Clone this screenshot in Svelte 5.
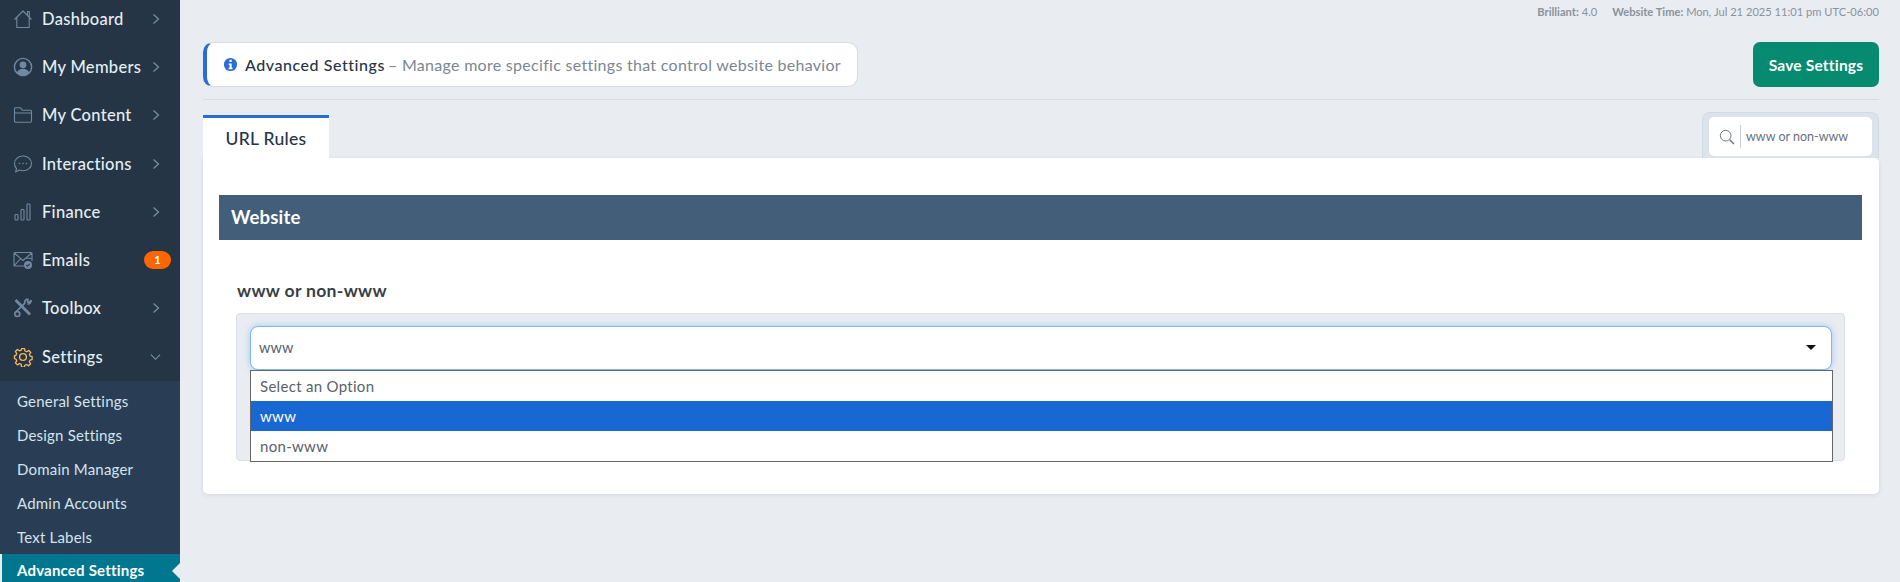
<script lang="ts">
  type Item = { label: string; icon: string; chevron?: 'right' | 'down'; badge?: string };
  const items: Item[] = [
    { label: 'Dashboard', icon: 'home', chevron: 'right' },
    { label: 'My Members', icon: 'user', chevron: 'right' },
    { label: 'My Content', icon: 'folder', chevron: 'right' },
    { label: 'Interactions', icon: 'chat', chevron: 'right' },
    { label: 'Finance', icon: 'bars', chevron: 'right' },
    { label: 'Emails', icon: 'mail', badge: '1' },
    { label: 'Toolbox', icon: 'tools', chevron: 'right' },
    { label: 'Settings', icon: 'gear', chevron: 'down' }
  ];
  const subItems = ['General Settings', 'Design Settings', 'Domain Manager', 'Admin Accounts', 'Text Labels'];
  const options = ['Select an Option', 'www', 'non-www'];
</script>

<div class="page">
  <aside class="sidebar">
    <ul class="menu">
      {#each items as item (item.label)}
        <li class="item">
          <svg class="icon" class:gold={item.icon === 'gear'} viewBox="0 0 20 20" fill="none" stroke="currentColor" stroke-width="1.100">
            {#if item.icon === 'home'}
              <path d="M1.500 10.500 10 2l8.500 8.500M3.800 8.500V18.500h12.400V8.500M14.500 6V2.500h1.800v5.500" stroke-linejoin="round" />
            {:else if item.icon === 'user'}
              <circle cx="10" cy="10" r="8.600" stroke-width="1.400" />
              <circle cx="10" cy="7.800" r="3.400" fill="currentColor" stroke="none" />
              <path d="M3.800 15.800c1.200-3 3.400-4 6.200-4s5 1 6.200 4c-1.600 1.800-3.800 2.800-6.200 2.800s-4.600-1-6.200-2.800Z" fill="currentColor" stroke="none" />
            {:else if item.icon === 'folder'}
              <path d="M1.500 16V3.800c0-.6.400-1 1-1h5l2 2.400h8c.6 0 1 .4 1 1V16c0 .7-.4 1.200-1 1.200h-15c-.6 0-1-.5-1-1.200ZM1.500 8h17" stroke-linejoin="round" />
            {:else if item.icon === 'chat'}
              <path d="M10 2c4.700 0 8.500 3.200 8.500 7.400S14.700 16.800 10 16.800c-1.300 0-2.500-.2-3.600-.7L2.600 18l.9-3.500C2.200 13.200 1.500 11.400 1.500 9.400 1.500 5.200 5.300 2 10 2Z" stroke-linejoin="round" />
              <circle cx="6.500" cy="9.500" r=".8" fill="currentColor" stroke="none" />
              <circle cx="10" cy="9.500" r=".8" fill="currentColor" stroke="none" />
              <circle cx="13.500" cy="9.500" r=".8" fill="currentColor" stroke="none" />
            {:else if item.icon === 'bars'}
              <rect x="2" y="12.500" width="3" height="5.500" rx=".8" />
              <rect x="8" y="7.500" width="3" height="10.500" rx=".8" />
              <rect x="14" y="2" width="3" height="16" rx=".8" />
            {:else if item.icon === 'mail'}
              <path d="M11.500 16H2c-.6 0-1-.4-1-1V3.500c0-.6.400-1 1-1h16c.6 0 1 .4 1 1V11M1.300 3 10 10.500 18.700 3M1.300 15.500l6-6.500M18.700 8.500l-6-.5" stroke-linejoin="round" />
              <circle cx="15" cy="15" r="4" fill="currentColor" stroke="none" />
              <path d="m13.300 15 1.300 1.300 2.100-2.400" stroke="#263545" />
            {:else if item.icon === 'tools'}
              <path d="M2.500 2 17 16.500" stroke-width="2.800" />
              <path d="M18.300 2.300 15.700 4.800l-1-.8.200-2.600c-2.300-.4-3.900 1.800-3 3.800L2.800 14" stroke-width="1.700" stroke-linejoin="round" />
              <circle cx="4.300" cy="16" r="2.500" stroke-width="1.600" />
              <path d="M14.500 5.800c1.600.8 3.600-.5 3.800-3.500" stroke-width="1.500" />
            {:else if item.icon === 'gear'}
              <circle cx="10" cy="10" r="3.400" stroke-width="1.400" />
              <path d="M8.500 1.500h3l.5 2.500 1.800.8 2.200-1.400 2.100 2.100-1.400 2.200.8 1.800 2 .5v3l-2.200.5-.8 1.800 1.400 2.200-2.100 2.100-2.200-1.400-1.800.8-.5 2h-3L8 18l-1.800-.8L4 18.600 1.900 16.500 3.300 14.300 2.500 12.500.9 12V9l1.600-.5.800-1.800L1.900 4.500 4 2.400l2.200 1.400L8 3Z" stroke-width="1.400" stroke-linejoin="round" transform="translate(.6 .2) scale(.95)" />
            {/if}
          </svg>
          <span class="label">{item.label}</span>
          {#if item.badge}
            <span class="badge">{item.badge}</span>
          {:else if item.chevron === 'right'}
            <svg class="chev" viewBox="0 0 8 12" fill="none" stroke="currentColor" stroke-width="1.200"><path d="m1.500 1.500 5 4.500-5 4.500" /></svg>
          {:else}
            <svg class="chev chev-down" viewBox="0 0 12 8" fill="none" stroke="currentColor" stroke-width="1.200"><path d="m1 1.500 5 5 5-5" /></svg>
          {/if}
        </li>
      {/each}
    </ul>
    <ul class="submenu">
      {#each subItems as sub (sub)}
        <li class="sub">{sub}</li>
      {/each}
      <li class="sub active">Advanced Settings</li>
    </ul>
  </aside>

  <main class="main">
    <div class="status">
      <span><b>Brilliant:</b> 4.0</span>
      <span><b>Website Time:</b> Mon, Jul 21 2025 11:01 pm UTC-06:00</span>
    </div>

    <header class="head">
      <div class="notice">
        <svg class="info" viewBox="0 0 16 16"><circle cx="8" cy="8" r="7" fill="#2a6dd6" /><rect x="6.900" y="3" width="2.400" height="2.300" fill="#fff" /><path d="M6 6.800h3.200v4.600h1V13H6v-1.600h1V8.400H6Z" fill="#fff" /></svg>
        <span class="notice-title">Advanced Settings</span>
        <span class="notice-text">– Manage more specific settings that control website behavior</span>
      </div>
      <button class="save" type="button">Save Settings</button>
    </header>

    <div class="tabs">
      <div class="tab">URL Rules</div>
      <div class="search-wrap">
        <div class="search">
          <svg class="search-icon" viewBox="0 0 18 18" fill="none" stroke="#6f7882" stroke-width="1.100"><circle cx="7.500" cy="7.500" r="6" /><path d="m12 12 4.800 4.800" stroke-width="1.600" /></svg>
          <span class="search-text">www or non-www</span>
        </div>
      </div>
    </div>

    <section class="card">
      <h2 class="bar">Website</h2>
      <h3 class="field-label">www or non-www</h3>
      <div class="well">
        <div class="select">
          <span>www</span>
          <i class="caret"></i>
        </div>
        <ul class="dropdown">
          {#each options as opt, i (opt)}
            <li class="opt" class:on={i === 1}>{opt}</li>
          {/each}
        </ul>
      </div>
    </section>
  </main>
</div>

<style>
  :global(body) {
    margin: 0;
    background: #e9ecf1;
  }
  .page {
    display: flex;
    height: 582px;
    overflow: hidden;
    font-family: Lato, "Noto Sans", sans-serif;
  }
  ul {
    list-style: none;
    margin: 0;
    padding: 0;
  }
  .sidebar {
    width: 180px;
    flex: none;
    background: #263545;
    color: #e4eef5;
  }
  .menu {
    margin-top: -5.500px;
  }
  .item {
    display: flex;
    align-items: center;
    height: 48.300px;
    padding: 0 13px 0 13px;
    box-sizing: border-box;
    font-size: 16.500px;
    font-weight: 500;
    letter-spacing: 0.3px;
  }
  .icon {
    width: 20px;
    height: 20px;
    flex: none;
    margin-right: 9px;
    color: #7089a3;
  }
  .icon.gold {
    color: #efb95f;
  }
  .label {
    flex: 1;
  }
  .chev {
    width: 8px;
    height: 12px;
    margin-right: 7px;
    color: #7c90a5;
  }
  .chev-down {
    width: 11px;
    height: 8px;
    margin-right: 6px;
  }
  .badge {
    width: 27px;
    height: 18px;
    border-radius: 9px;
    background: #ff6600;
    color: #fff;
    font-size: 11px;
    font-weight: 700;
    line-height: 18px;
    text-align: center;
    margin-right: -4px;
  }
  .submenu {
    background: #293e54;
    padding-top: 4.500px;
  }
  .sub {
    height: 33.800px;
    line-height: 33.800px;
    padding-left: 17px;
    font-size: 15px;
    letter-spacing: 0.2px;
    color: #d5e3ee;
  }
  .sub.active {
    position: relative;
    background: #00778f;
    border-left: 2px solid #e9ecf1;
    padding-left: 15px;
    color: #fff;
    font-weight: 700;
  }
  .sub.active::after {
    content: '';
    position: absolute;
    right: 0;
    top: 9px;
    border: 8px solid transparent;
    border-right-color: #e9ecf1;
    border-left-width: 0;
  }
  .main {
    flex: 1;
    min-width: 0;
    padding: 0 21px 0 23px;
  }
  .status {
    display: flex;
    justify-content: flex-end;
    gap: 15px;
    height: 25px;
    padding-top: 5px;
    box-sizing: border-box;
    font-size: 11.150px;
    color: #8b929b;
  }
  .status b {
    font-weight: 700;
  }
  .head {
    display: flex;
    justify-content: space-between;
    align-items: center;
    height: 75px;
    padding: 17px 0 12px;
    box-sizing: border-box;
    border-bottom: 1px solid #d9dde2;
  }
  .notice {
    display: flex;
    align-items: center;
    width: 655px;
    height: 45px;
    box-sizing: border-box;
    padding-left: 16px;
    background: #fff;
    border: 1px solid #d8dce1;
    border-left: 4px solid #2a6dd6;
    border-radius: 10px;
    font-size: 16px;
  }
  .info {
    width: 15px;
    height: 15px;
    margin-right: 7px;
  }
  .notice-title {
    color: #263545;
    font-weight: 500;
    margin-right: 3px;
    letter-spacing: 0.55px;
  }
  .notice-text {
    color: #7c8793;
    letter-spacing: 0.29px;
    word-spacing: 0;
  }
  .save {
    width: 126px;
    height: 45px;
    border: 0;
    border-radius: 7px;
    background: #068a70;
    color: #fff;
    font: 700 15.500px Lato, sans-serif;
    letter-spacing: 0.2px;
  }
  .tabs {
    display: flex;
    justify-content: space-between;
    align-items: flex-end;
    height: 58px;
  }
  .tab {
    width: 126px;
    height: 43px;
    box-sizing: border-box;
    padding-top: 10px;
    text-align: center;
    background: #fff;
    border-top: 3px solid #2a6dd6;
    color: #263545;
    font-size: 17.500px;
    font-weight: 500;
    letter-spacing: 0.3px;
  }
  .search-wrap {
    width: 177px;
    height: 46px;
    box-sizing: border-box;
    padding: 4px 6px 1px;
    background: #dbe3eb;
    border: 1px solid #cfdbe6;
    border-bottom: 0;
    border-radius: 8px 8px 0 0;
  }
  .search {
    display: flex;
    align-items: center;
    height: 39px;
    padding-left: 10px;
    background: #fff;
    border-radius: 5px;
  }
  .search-icon {
    width: 16px;
    height: 16px;
    margin-right: 5px;
  }
  .search-text {
    border-left: 1px solid #c9ced4;
    padding-left: 5px;
    line-height: 23px;
    font-size: 12.500px;
    color: #68727c;
  }
  .card {
    height: 336px;
    box-sizing: border-box;
    padding: 37px 17px 0 16px;
    background: #fff;
    border-radius: 0 5px 5px 5px;
    box-shadow: 0 1px 4px rgba(60, 70, 90, 0.12);
  }
  .bar {
    margin: 0;
    height: 45px;
    padding-left: 12px;
    background: #435e79;
    color: #fff;
    font-size: 18.500px;
    font-weight: 700;
    line-height: 45px;
    letter-spacing: 0.2px;
  }
  .field-label {
    margin: 41px 0 0 18px;
    height: 32px;
    font-size: 17.600px;
    font-weight: 700;
    line-height: 20px;
    color: #3a3f45;
    letter-spacing: 0.3px;
  }
  .well {
    position: relative;
    height: 148px;
    box-sizing: border-box;
    margin: 0 17px;
    padding: 12px 12px 0 13px;
    background: #e9edf2;
    border: 1px solid #dcdfe3;
    border-radius: 4px;
  }
  .select {
    display: flex;
    justify-content: space-between;
    align-items: center;
    height: 44px;
    box-sizing: border-box;
    padding: 0 15px 2px 8px;
    background: #fff;
    border: 1px solid #7db8ef;
    border-radius: 8px;
    box-shadow: 0 0 6px rgba(90, 165, 235, 0.5);
    font-size: 14.500px;
    color: #59626c;
    letter-spacing: 0.1px;
  }
  .caret {
    border: 5px solid transparent;
    border-top: 5px solid #111;
    border-bottom-width: 0;
  }
  .dropdown {
    position: absolute;
    left: 13px;
    right: 11px;
    top: 56px;
    background: #fff;
    border: 1px solid #666;
    font-size: 15px;
    color: #59626c;
    letter-spacing: 0.3px;
  }
  .opt {
    height: 30px;
    line-height: 30px;
    padding-left: 9px;
  }
  .opt.on {
    background: #1967d2;
    color: #fff;
  }
</style>
